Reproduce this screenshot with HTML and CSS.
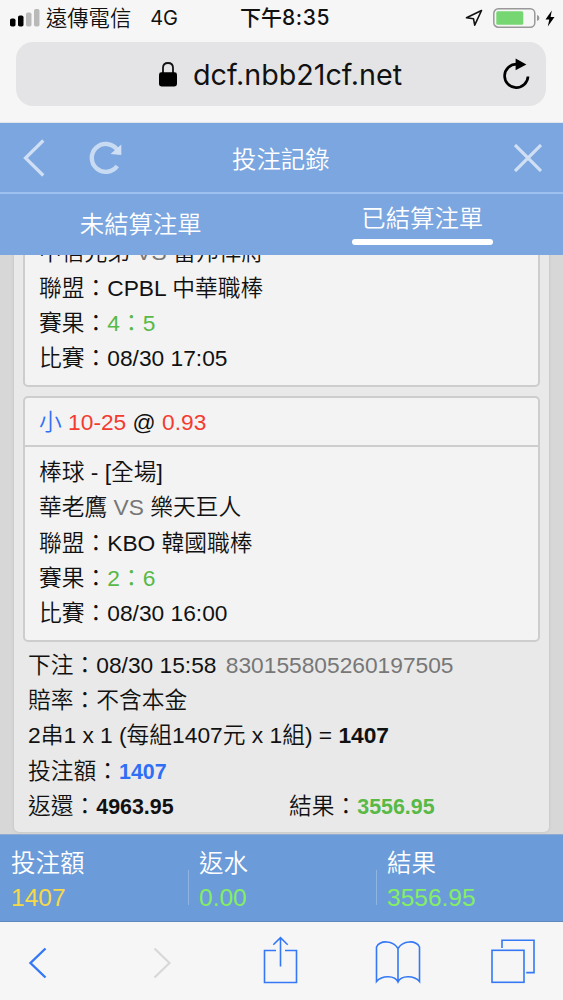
FILE: index.html
```html
<!DOCTYPE html>
<html lang="zh-Hant">
<head>
  <meta charset="UTF-8">
  <meta name="viewport" content="width=device-width, initial-scale=1.0">
  <title>投注記錄</title>
  <link rel="stylesheet" href="styles.css">
</head>
<body>
  <div class="screen">
    <div class="browser-top">
      <div class="status-bar">
        <div class="carrier">
          <svg class="signal" width="30" height="18" viewBox="0 0 30 18">
            <rect x="0" y="9.5" width="5.5" height="8" rx="1.8" fill="#000"/>
            <rect x="8" y="6.5" width="5.5" height="11" rx="1.8" fill="#000"/>
            <rect x="16" y="3.5" width="5.5" height="14" rx="1.8" fill="#b9b9b9"/>
            <rect x="24" y="0" width="5.5" height="17.5" rx="1.8" fill="#b9b9b9"/>
          </svg>
          <span class="carrier-name">遠傳電信</span>
          <span class="network">4G</span>
        </div>
        <div class="clock">下午<span class="clock-time">8:35</span></div>
        <div class="status-icons">
          <svg width="18" height="18" viewBox="0 0 18 18" fill="none" stroke="#111" stroke-width="1.6" stroke-linejoin="round">
            <path d="M16.5 1.5 L1.5 8.8 L8.5 9.7 L9.7 16.2 Z"/>
          </svg>
          <svg class="battery" width="47" height="20" viewBox="0 0 47 20">
            <rect x="0.8" y="0.8" width="41" height="18.4" rx="4.5" fill="none" stroke="#999" stroke-width="1.5"/>
            <rect x="3.3" y="3.3" width="27" height="13.4" rx="1.5" fill="#76d672"/>
            <path d="M44 7 Q46.4 7.5 46.4 10 Q46.4 12.5 44 13 Z" fill="#999"/>
          </svg>
          <svg width="10" height="17" viewBox="0 0 10 17">
            <path d="M6.8 0.5 L0.5 9.5 H4.3 L2.8 16.5 L9.5 7 H5.6 Z" fill="#000"/>
          </svg>
        </div>
      </div>
      <div class="address-bar">
        <svg class="lock" width="18" height="25" viewBox="0 0 18 25">
          <path d="M4 12 V5.8 Q4 1 9 1 Q14 1 14 5.8 V12" fill="none" stroke="#111" stroke-width="1.8"/>
          <rect x="0" y="10.3" width="18" height="14.2" rx="2.4" fill="#000"/>
        </svg>
        <span class="url">dcf.nbb21cf.net</span>
        <svg class="reload" width="28" height="32" viewBox="0 0 28 32">
          <path d="M14.5 6.2 A11.7 11.7 0 1 0 26 18.5" fill="none" stroke="#000" stroke-width="2.7"/>
          <path d="M13.6 0.5 L24.4 6.5 L13.6 12.2 Z" fill="#000"/>
        </svg>
      </div>
    </div>

    <header class="page-header">
      <svg class="header-back" width="22" height="38" viewBox="0 0 22 38" fill="none" stroke="#d0dff4" stroke-width="3.2">
        <path d="M20.3 1.5 L2.5 19 L20.3 36.5"/>
      </svg>
      <svg class="header-refresh" width="34" height="34" viewBox="0 0 34 34">
        <path d="M28 8.5 A14 14 0 1 0 28.2 25" fill="none" stroke="#c9dbf2" stroke-width="4.4"/>
        <path d="M32.3 3.5 V14 L21.5 13 Z" fill="#d0dff4"/>
      </svg>
      <h1 class="page-title">投注記錄</h1>
      <svg class="header-close" width="28" height="28" viewBox="0 0 28 28" stroke="#d0dff4" stroke-width="3.2">
        <path d="M1 1 L27 27 M27 1 L1 27"/>
      </svg>
    </header>

    <nav class="tabs">
      <div class="tab">未結算注單</div>
      <div class="tab active">已結算注單</div>
    </nav>

    <main class="bet-list">
      <section class="bet">
        <div class="match">
          <div class="match-info">
            <p>中信兄弟 <span class="muted">VS</span> 富邦悍將</p>
            <p>聯盟：CPBL 中華職棒</p>
            <p>賽果：<span class="green">4：5</span></p>
            <p>比賽：08/30 17:05</p>
          </div>
        </div>
        <div class="match">
          <div class="match-pick"><span class="blue">小</span> <span class="red">10-25</span> @ <span class="red">0.93</span></div>
          <div class="match-info">
            <p>棒球 - [全場]</p>
            <p>華老鷹 <span class="muted">VS</span> 樂天巨人</p>
            <p>聯盟：KBO 韓國職棒</p>
            <p>賽果：<span class="green">2：6</span></p>
            <p>比賽：08/30 16:00</p>
          </div>
        </div>
        <div class="bet-info">
          <p>下注：08/30 15:58 <span class="muted order-no">830155805260197505</span></p>
          <p>賠率：不含本金</p>
          <p>2串1 x 1 (每組1407元 x 1組) = <b>1407</b></p>
          <p>投注額：<b class="money blue">1407</b></p>
          <div class="payout">
            <p>返還：<b class="money">4963.95</b></p>
            <p>結果：<b class="money green">3556.95</b></p>
          </div>
        </div>
      </section>
    </main>

    <footer class="summary">
      <div class="summary-item">
        <span>投注額</span>
        <span class="amount yellow">1407</span>
      </div>
      <div class="summary-item">
        <span>返水</span>
        <span class="amount">0.00</span>
      </div>
      <div class="summary-item">
        <span>結果</span>
        <span class="amount">3556.95</span>
      </div>
    </footer>

    <div class="toolbar">
      <svg width="20" height="32" viewBox="0 0 20 32" fill="none" stroke="#3478f6" stroke-width="2.4">
        <path d="M17.5 1.5 L2.5 16 L17.5 30.5"/>
      </svg>
      <svg width="20" height="32" viewBox="0 0 20 32" fill="none" stroke="#d8d8d8" stroke-width="2.2">
        <path d="M2.5 1.5 L17.5 16 L2.5 30.5"/>
      </svg>
      <svg class="share" width="36" height="48" viewBox="0 0 36 48" fill="none" stroke="#3478f6" stroke-width="1.6">
        <path d="M13 14.5 H1.5 V46.5 H33.5 V14.5 H22 M17.5 30.5 V2 M10.3 8.8 L17.5 1.7 L24.7 8.8"/>
      </svg>
      <svg class="book" width="46" height="44" viewBox="0 0 46 44" fill="none" stroke="#3478f6" stroke-width="1.6">
        <path d="M23 8.5 C18 0 5 0 1.5 7 V41.5 C7 35 20 35 23 42 C26 35 39 35 44.5 41.5 V7 C41 0 28 0 23 8.5 Z M23 8.5 V42"/>
      </svg>
      <svg class="pages" width="44" height="45" viewBox="0 0 44 45" fill="none" stroke="#3478f6" stroke-width="1.6">
        <rect x="1" y="11.3" width="32" height="32"/>
        <path d="M11 9 V1.3 H43 V33.6 H35.2"/>
      </svg>
    </div>
  </div>
</body>
</html>
```
FILE: styles.css
```css
:root {
  --chrome: #f6f6f6;
  --header-blue: #7ba6df;
  --summary-blue: #6b9bd8;
  --border-gray: #cdcdcd;
}

* {
  box-sizing: border-box;
}

body {
  margin: 0;
  font-family: "Liberation Sans", "Noto Sans CJK TC", sans-serif;
  font-weight: 350;
  color: #111;
}

p, h1 {
  margin: 0;
}

b {
  font-weight: 700;
}

.screen {
  display: flex;
  flex-direction: column;
  width: 563px;
  height: 1000px;
  overflow: hidden;
}

/* browser chrome */
.browser-top {
  height: 123px;
  background: var(--chrome);
  border-bottom: 1px solid #e2e5ea;
  flex-shrink: 0;
}

.status-bar {
  display: grid;
  grid-template-columns: 1fr auto 1fr;
  align-items: center;
  height: 36px;
  margin-bottom: 6px;
  padding: 0 8px 0 10px;
  font-family: Inter, "Noto Sans CJK TC", sans-serif;
  font-size: 21.3px;
  line-height: 36px;
}

.carrier {
  display: flex;
  align-items: center;
}

.carrier-name {
  margin-left: 6px;
}

.network {
  margin-left: 19px;
  font-size: 20px;
  font-weight: 400;
}

.clock {
  padding-left: 5px;
  font-size: 21px;
  font-weight: 500;
}

.clock-time {
  letter-spacing: 0.6px;
}

.status-icons {
  display: flex;
  justify-content: flex-end;
  align-items: center;
}

.battery {
  margin: 0 5px 0 10px;
}

.address-bar {
  display: flex;
  align-items: center;
  height: 64px;
  margin: 0 17px 0 16px;
  padding: 0 16px 0 143px;
  border-radius: 17px;
  background: #e4e4e6;
}

.url {
  margin-left: 16px;
  font-family: Inter, sans-serif;
  font-size: 28.7px;
  font-weight: 400;
}

.reload {
  margin-left: auto;
}

/* page header */
.page-header {
  display: grid;
  grid-template-columns: 66px 143px 121px 1fr;
  align-items: center;
  height: 71px;
  padding: 0 21px 0 23px;
  background: var(--header-blue);
  border-bottom: 2px solid #9dc0ee;
  color: #fff;
  flex-shrink: 0;
}

.page-title {
  font-size: 24.4px;
  font-weight: 350;
  white-space: nowrap;
}

.header-close {
  justify-self: end;
}

.tabs {
  display: flex;
  height: 61px;
  background: var(--header-blue);
  color: #fff;
  font-size: 24.4px;
  flex-shrink: 0;
}

.tab {
  flex: 1;
  text-align: center;
  line-height: 62px;
}

.tab.active {
  padding-top: 5px;
  line-height: 40px;
}

.tab.active::after {
  content: "";
  display: block;
  width: 141px;
  height: 6px;
  margin: 0 auto;
  background: #fff;
  border-radius: 3px;
}

/* bets */
.bet-list {
  display: flex;
  flex-direction: column;
  justify-content: flex-end;
  height: 579px;
  padding: 0 14px 2px;
  background: #d7d7d7;
  font-size: 22.75px;
  line-height: 35.2px;
  overflow: hidden;
  flex-shrink: 0;
}

.bet {
  padding: 0 9px 8px;
  background: #e9e9e9;
  border-radius: 0 0 5px 5px;
  box-shadow: 0 0 3px #bbb;
}

.bet p {
  height: 35.2px;
  white-space: nowrap;
}

.match {
  margin-bottom: 9px;
  background: #f3f3f3;
  border: 2px solid var(--border-gray);
  border-radius: 5px;
}

.match-pick {
  height: 49px;
  padding: 0 14px;
  border-bottom: 2px solid var(--border-gray);
  line-height: 48px;
}

.match-info {
  padding: 8px 14px 9px;
}

.bet-info {
  padding: 0 5px;
  margin-top: -3px;
}

.order-no {
  margin-left: 3px;
}

.money {
  font-size: 21.4px;
}

.payout {
  display: grid;
  grid-template-columns: 261px 1fr;
}

.muted {
  color: #777;
}

.green {
  color: #58b947;
}

.blue {
  color: #2f6ff5;
}

.red {
  color: #f43b30;
}

/* totals */
.summary {
  display: grid;
  grid-template-columns: 188px 188px 1fr;
  height: 88px;
  padding-top: 12px;
  background: var(--summary-blue);
  border-top: 1px solid #8fabcf;
  border-bottom: 1px solid #5f88bc;
  color: #fff;
  font-size: 24.5px;
  line-height: 34px;
  flex-shrink: 0;
}

.summary-item {
  display: flex;
  flex-direction: column;
  padding-left: 11px;
  background: linear-gradient(#8fb3e3, #8fb3e3) no-repeat 0 23px / 1px 35px;
}

.summary-item:first-child {
  background: none;
}

.amount {
  color: #84ee65;
}

.amount.yellow {
  color: #f5d949;
}

.toolbar {
  display: grid;
  grid-template-columns: 124px 111px 112px 116px 44px;
  align-items: center;
  height: 78px;
  padding: 4px 0 0 28px;
  background: var(--chrome);
  flex-shrink: 0;
}

.share {
  margin-top: -7px;
}

.book {
  margin-top: -2px;
}

.pages {
  margin-top: -4px;
}
```
